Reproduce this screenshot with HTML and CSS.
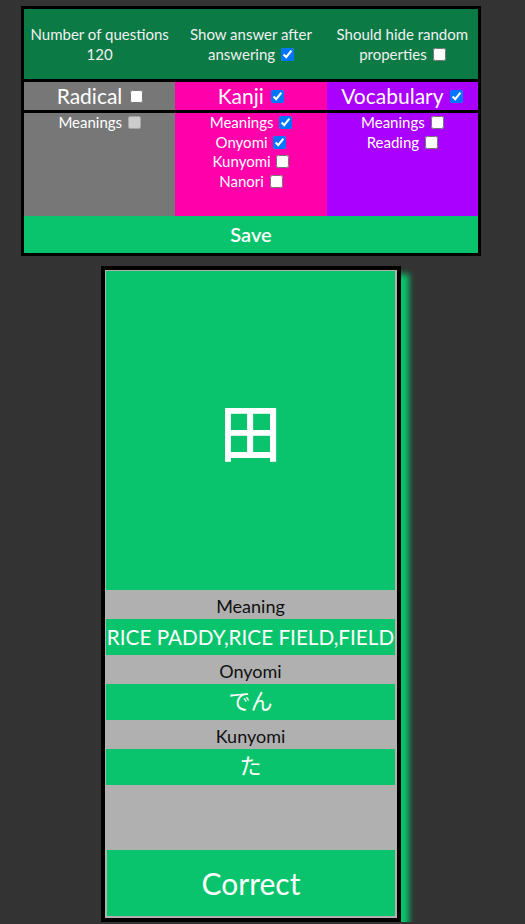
FILE: index.html
```html
<!DOCTYPE html>
<html>
<head>
<meta charset="utf-8">
<link rel="stylesheet" href="styles.css">
</head>
<body>
<div class="page">
  <div class="panel">
    <div class="settings">
      <div class="setting">Number of questions<br>120</div>
      <div class="setting">Show answer after<br>answering <input type="checkbox" checked></div>
      <div class="setting">Should hide random<br>properties <input type="checkbox"></div>
    </div>
    <div class="types">
      <div class="type radical">Radical <input type="checkbox"></div>
      <div class="type kanji">Kanji <input type="checkbox" checked></div>
      <div class="type vocab">Vocabulary <input type="checkbox" checked></div>
    </div>
    <div class="options">
      <div class="opt radical">
        <div>Meanings <input type="checkbox" disabled></div>
      </div>
      <div class="opt kanji">
        <div>Meanings <input type="checkbox" checked></div>
        <div>Onyomi <input type="checkbox" checked></div>
        <div>Kunyomi <input type="checkbox"></div>
        <div>Nanori <input type="checkbox"></div>
      </div>
      <div class="opt vocab">
        <div>Meanings <input type="checkbox"></div>
        <div>Reading <input type="checkbox"></div>
      </div>
    </div>
    <div class="save">Save</div>
  </div>

  <div class="card">
    <div class="subject">田</div>
    <div class="label">Meaning</div>
    <div class="value meaning">RICE PADDY,RICE FIELD,FIELD</div>
    <div class="label">Onyomi</div>
    <div class="value jp">でん</div>
    <div class="label">Kunyomi</div>
    <div class="value jp">た</div>
    <div class="spacer"></div>
    <div class="correct">Correct</div>
  </div>
</div>
</body>
</html>
```

FILE: styles.css
```css
html, body {
  margin: 0;
  padding: 0;
  background: #333333;
}
body {
  font-family: Lato, "Noto Sans CJK JP", sans-serif;
  color: #fff;
}
.page {
  width: 460px;
  padding: 6px 0 0 21px;
  display: flex;
  flex-direction: column;
  align-items: center;
  gap: 10px;
}
.panel {
  width: 460px;
  box-sizing: border-box;
  border: 3px solid #000;
  display: flex;
  flex-direction: column;
}
.settings {
  background: #0b7a45;
  display: grid;
  grid-template-columns: 1fr 1fr 1fr;
  height: 70px;
  align-items: center;
  border-bottom: 3px solid #000;
}
.setting {
  text-align: center;
  font-size: 15px;
  line-height: 20px;
  color: #f0f0f0;
}
input[type="checkbox"] {
  width: 13px;
  height: 13px;
  margin: 0 0 0 2px;
  vertical-align: -1px;
}
.types {
  display: grid;
  grid-template-columns: 1fr 1fr 1fr;
  border-bottom: 3px solid #000;
}
.type {
  height: 28px;
  line-height: 28px;
  font-size: 21px;
  text-align: center;
}
.type input { vertical-align: 1px; }
.radical { background: #777777; }
.kanji { background: #ff00aa; }
.vocab { background: #aa00ff; }
.options {
  display: grid;
  grid-template-columns: 1fr 1fr 1fr;
  height: 103px;
}
.opt {
  font-size: 15px;
  line-height: 19.5px;
  text-align: center;
}
.save {
  background: #09c46c;
  height: 37px;
  line-height: 37px;
  text-align: center;
  font-size: 20px;
  font-weight: 600;
}
.card {
  width: 300px;
  box-sizing: border-box;
  border: 4px solid #000;
  background: #b0b0b0;
  padding: 1px 2px 2px 1px;
  display: flex;
  flex-direction: column;
  box-shadow: 8px 8px 6px #09c46c;
}
.subject {
  height: 319px;
  background: #09c46c;
  display: flex;
  align-items: center;
  justify-content: center;
  font-family: "Noto Sans CJK JP", sans-serif;
  font-size: 62px;
  font-weight: 500;
  padding-bottom: 2px;
  box-sizing: border-box;
}
.label {
  height: 29px;
  line-height: 33px;
  text-align: center;
  color: #111;
  font-size: 18px;
}
.value {
  height: 36px;
  background: #09c46c;
  line-height: 36px;
  font-size: 21px;
  white-space: nowrap;
  text-align: center;
}
.value.meaning {
  font-size: 20.7px;
}
.value.jp {
  font-family: "Noto Sans CJK JP", sans-serif;
  font-weight: 400;
  font-size: 22px;
  line-height: 30px;
}
.spacer { height: 65px; }
.correct {
  height: 66px;
  margin: 0 0 0 1px;
  background: #09c46c;
  line-height: 66px;
  text-align: center;
  font-size: 30px;
}
```
